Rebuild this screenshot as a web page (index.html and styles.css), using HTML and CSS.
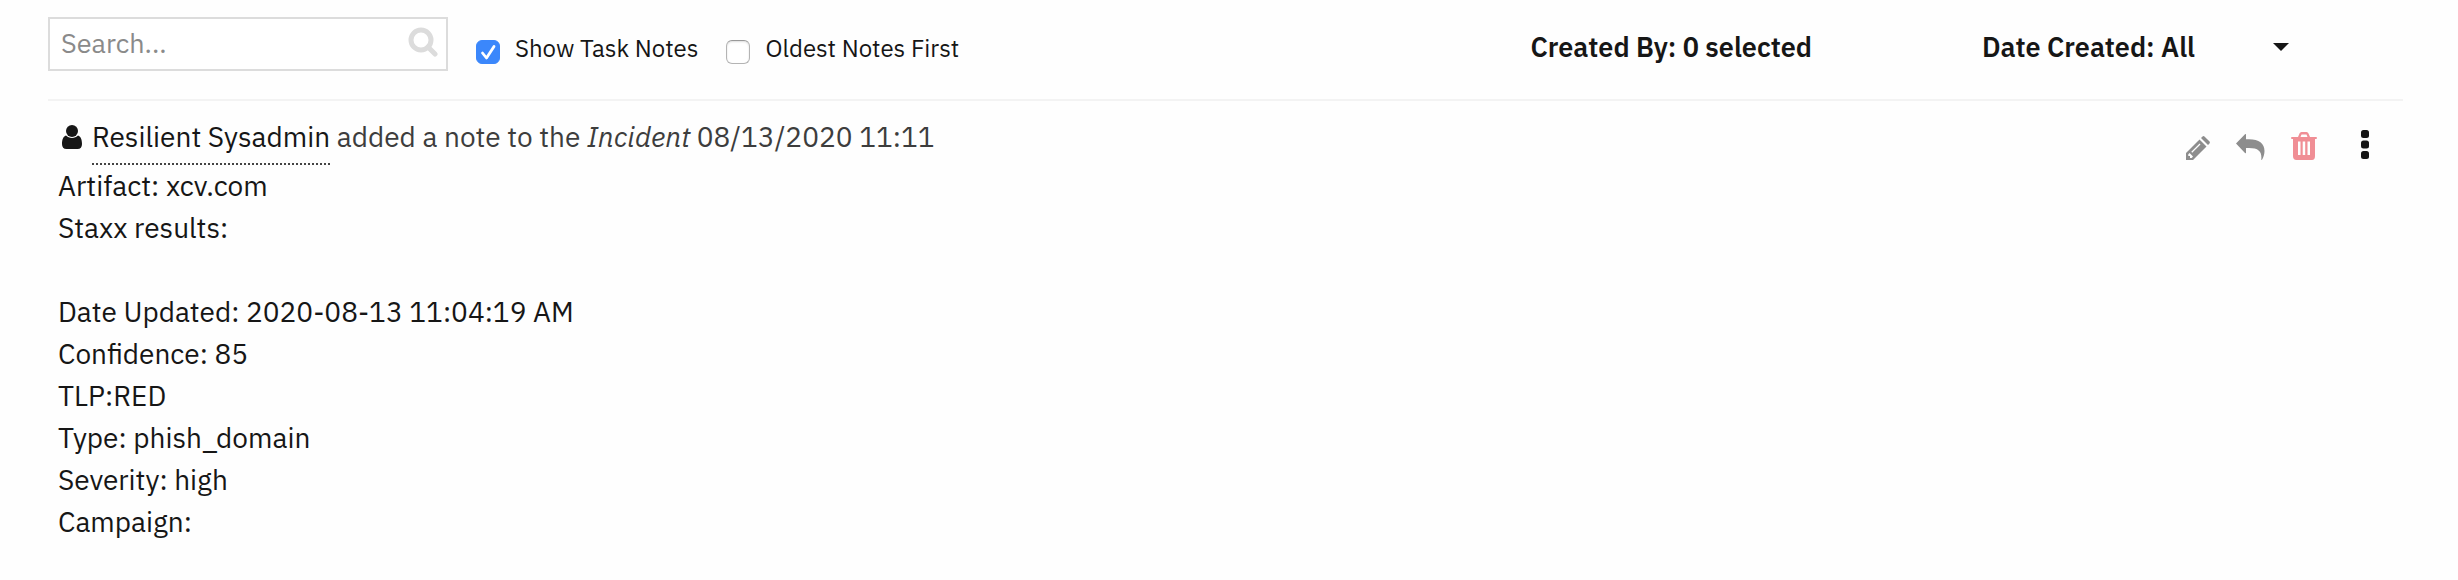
FILE: index.html
```html
<!DOCTYPE html>
<html lang="en">
<head>
<meta charset="utf-8">
<title>Notes</title>
<link rel="stylesheet" href="styles.css">
</head>
<body>
<main class="notes">
  <form class="toolbar">
    <div class="search">
      <input class="search-input" type="search" placeholder="Search..." aria-label="Search notes">
      <svg class="search-icon" viewBox="0 0 30 30" aria-hidden="true"><circle cx="13" cy="13" r="10" fill="none" stroke="currentColor" stroke-width="5"/><path d="M20 20l7 7" stroke="currentColor" stroke-width="5" stroke-linecap="round"/></svg>
    </div>
    <label class="check"><input class="check-box" type="checkbox" checked><span>Show Task Notes</span></label>
    <label class="check"><input class="check-box" type="checkbox"><span>Oldest Notes First</span></label>
    <div class="filters">
      <button class="filter" type="button">Created By: 0 selected</button>
      <button class="filter filter-date" type="button"><span>Date Created: All</span><svg class="caret" viewBox="0 0 16 8" aria-hidden="true"><path d="M0 0h16l-8 8z"/></svg></button>
    </div>
  </form>
  <article class="note">
    <header class="note-header">
      <p class="byline">
        <svg class="user-icon" viewBox="0 0 20 24" aria-hidden="true"><circle cx="10" cy="6" r="6"/><path d="M4 10.500C1 11.500 0 15 0 19c0 3 1.500 5 4.500 5h11c3 0 4.500-2 4.500-5 0-4-1-7.500-4-8.500-1.500 1.600-3.600 2.500-6 2.500s-4.500-.9-6-2.500z"/></svg>
        <span><a class="author" href="#">Resilient Sysadmin</a> added a note to the <em>Incident</em> 08/13/2020 11:11</span>
      </p>
      <div class="actions">
        <button class="action" type="button" aria-label="Edit"><svg viewBox="0 0 24 24" width="24" height="24"><path fill-rule="evenodd" d="M0 24v-7L13.500 3.500l7 7L7 24zM2.300 18.300v1.700H4v2h1.700l1.300-1.400-3.400-3.500zM5.300 15.800l.9.900L14.500 8.400l-.9-.9zM15 2l1.300-1.300q1.200-1.200 2.400 0l4.600 4.600q1.200 1.200 0 2.400L22 9z"/></svg></button>
        <button class="action" type="button" aria-label="Reply"><svg viewBox="0 0 29 26" width="29" height="26"><path d="M0 9.500L9 .3q1-.8 1 .5v4.400h3c10 0 15.500 4 15.500 11.800 0 3-1 6-2.200 8.300q-1 1.500-1 0c.6-7.500-2.300-11.300-12.300-11.300h-3v4.500q0 1.200-1 .5z"/></svg></button>
        <button class="action action-delete" type="button" aria-label="Delete"><svg viewBox="0 0 26 28" width="26" height="28"><path fill-rule="evenodd" d="M1 5h6l1.500-3.500Q9 0 10.500 0h5q1.500 0 2 1.500L19 5h6q1 0 1 1t-1 1h-1v17q0 4-3 4H5.500q-3.500 0-3.500-4V7H1Q0 7 0 6t1-1zM9.500 5h7l-1-2.500h-5zM7 9.500V23h2.500V9.500zM11.700 9.500V23h2.500V9.500zM16.500 9.500V23H19V9.500z"/></svg></button>
        <button class="action action-more" type="button" aria-label="More actions"><svg viewBox="0 0 8 30" width="8" height="30"><rect y="0" width="8" height="8" rx="2.500"/><rect y="10.500" width="8" height="8" rx="2.500"/><rect y="21" width="8" height="8" rx="2.500"/></svg></button>
      </div>
    </header>
    <p class="note-body">Artifact: xcv.com<br>Staxx results:<br><br>Date Updated: 2020-08-13 11:04:19 AM<br>Confidence: 85<br>TLP:RED<br>Type: phish_domain<br>Severity: high<br>Campaign:</p>
  </article>
</main>
</body>
</html>
```
FILE: styles.css
```css
* { box-sizing: border-box; }
body {
  margin: 0;
  background: #fefefe;
  color: #161616;
  font-family: "IBM Plex Sans", Roboto, sans-serif;
  font-size: 28px;
  line-height: 42px;
}
button, input { font: inherit; color: inherit; }
button { padding: 0; border: 0; background: none; cursor: pointer; }
svg { display: block; fill: currentColor; }
.notes { padding: 17px 55px 0 48px; }
.toolbar {
  display: flex;
  align-items: flex-start;
  padding-bottom: 28px;
  border-bottom: 2px solid #f3f3f3;
}
.search { position: relative; width: 400px; margin-right: 28px; }
.search-input {
  display: block;
  width: 100%;
  height: 54px;
  padding: 0 48px 3px 11px;
  border: 2px solid #dcdcdc;
  border-radius: 0;
  background: #fff;
  font-size: 27px;
  appearance: none;
}
.search-input::placeholder { color: #8a8a8a; opacity: 1; }
.search-icon { position: absolute; top: 10px; right: 10px; width: 30px; height: 30px; color: #dcdcdc; }
.check {
  display: flex;
  align-items: flex-start;
  gap: 15px;
  margin-right: 28px;
  padding-top: 15px;
  font-size: 24px;
  line-height: 32px;
  white-space: nowrap;
}
.check-box {
  appearance: none;
  width: 24px;
  height: 24px;
  margin: 8px 0 0;
  border: 1px solid #b4b4b4;
  border-top-color: #999;
  border-radius: 6px;
  background: #fff;
  box-shadow: inset 0 1px 2px #ddd;
}
.check-box:checked {
  border-color: #3b87fb;
  background: #3b87fb url("data:image/svg+xml,%3Csvg xmlns='http://www.w3.org/2000/svg' viewBox='0 0 22 22'%3E%3Cpath d='M5.500 12l4 5L17 5.500' fill='none' stroke='white' stroke-width='2.800' stroke-linecap='round' stroke-linejoin='round'/%3E%3C/svg%3E") center / 22px;
  box-shadow: none;
}
.filters { display: flex; gap: 170px; margin-left: auto; padding: 14px 114px 0 0; }
.filter { font-size: 27px; font-weight: 600; line-height: 32px; white-space: nowrap; }
.filter-date { display: flex; align-items: center; justify-content: space-between; width: 307px; }
.caret { width: 16px; height: 8px; }
.note { padding: 15px 34px 0 10px; }
.note-header { display: flex; justify-content: space-between; align-items: flex-start; }
.byline { display: flex; gap: 10px; margin: 0; padding-left: 4px; color: #3d3d3d; }
.user-icon { width: 20px; height: 24px; margin-top: 9px; color: #161616; }
.author {
  padding-bottom: 8px;
  border-bottom: 2px dotted #444;
  color: #161616;
  text-decoration: none;
}
.actions { display: flex; align-items: flex-end; gap: 26px; padding-top: 14px; color: #8d8d8d; }
.action-delete { color: #f08e95; }
.action-more { margin-left: 18px; color: #161616; }
.note-body { margin: 0; padding-top: 5px; }
```
